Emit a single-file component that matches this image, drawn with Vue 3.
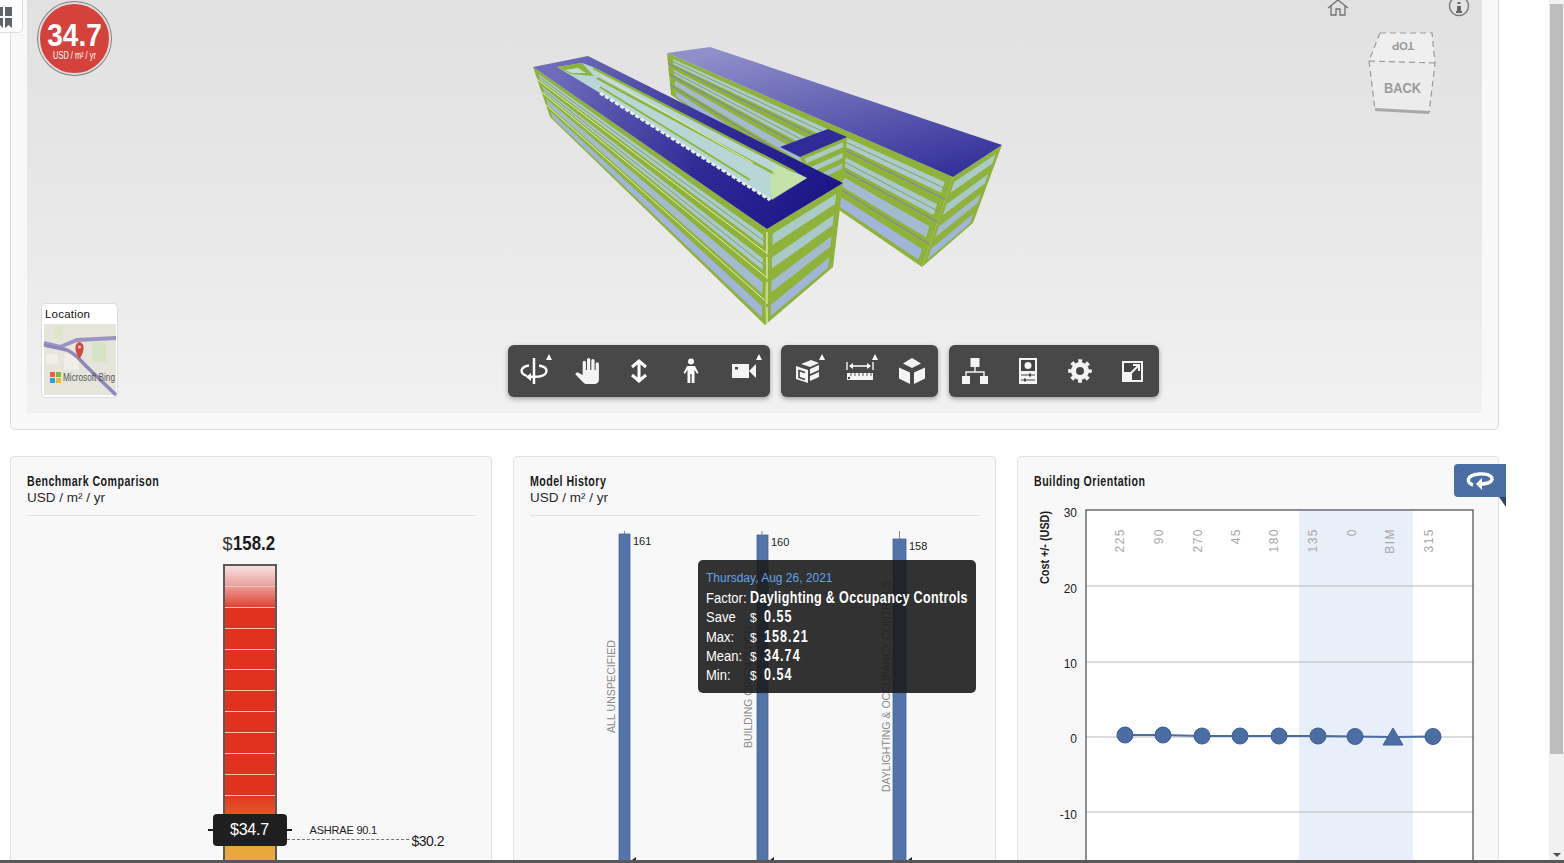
<script setup>
// Interpolate a point inside a four-cornered face
const mix = (a, b, t) => [a[0] + (b[0] - a[0]) * t, a[1] + (b[1] - a[1]) * t]
const at = (f, u, v) => mix(mix(f[0], f[1], u), mix(f[3], f[2], u), v)
const pts = (list) => list.map((p) => p[0].toFixed(1) + ',' + p[1].toFixed(1)).join(' ')

const glass = ['#abcbc8', '#a9c8ca', '#a3bacf', '#a1b4da']

// Window bands of one building face, one per floor
function bands(face, inset) {
  return glass.map((fill, i) => ({
    fill,
    points: pts([
      at(face, inset, (i + 0.34) / 4),
      at(face, 1 - inset, (i + 0.34) / 4),
      at(face, 1 - inset, (i + 0.82) / 4),
      at(face, inset, (i + 0.82) / 4),
    ]),
  }))
}

// Thin slab lines between floors, plus a frame line through the upper windows
function slabs(face, color) {
  const rows = [
    { v: 0.25, color }, { v: 0.5, color }, { v: 0.75, color },
    { v: 0.145, color: '#8a9c6c' }, { v: 0.395, color: '#8a9c6c' },
  ]
  return rows.map((r) => {
    const a = at(face, 0, r.v)
    const b = at(face, 1, r.v)
    return { x1: a[0], y1: a[1], x2: b[0], y2: b[1], color: r.color }
  })
}

const backSide = [[667, 53], [953, 177], [922, 267], [671, 95]]
const backEnd = [[953, 177], [1002, 145], [973, 223], [922, 267]]
const frontSide = [[533, 67], [767, 229], [765, 325], [550, 117]]
const frontEnd = [[767, 229], [843, 183], [833, 267], [765, 325]]
const linkSide = [[800, 157], [847, 137], [844, 180], [815, 195]]

const faces = [
  { id: 'backSide', outline: pts(backSide), windows: bands(backSide, 0.02), lines: slabs(backSide, '#7f78c4') },
  { id: 'backEnd', outline: pts(backEnd), windows: bands(backEnd, 0.08), lines: [] },
  { id: 'linkSide', outline: pts(linkSide), windows: bands(linkSide, 0.08).slice(0, 3), lines: [] },
  { id: 'frontSide', outline: pts(frontSide), windows: bands(frontSide, 0.015), lines: slabs(frontSide, '#e6f0a8') },
  { id: 'frontEnd', outline: pts(frontEnd), windows: bands(frontEnd, 0.08), lines: [] },
]

const segments = [
  'fade1', 'fade2', 'red', 'red', 'red', 'red', 'red', 'red', 'red', 'red', 'red',
]

const bars = [
  { x: 619, w: 11, top: 534, value: 161, label: 'ALL UNSPECIFIED', labelX: 615, labelY: 733, length: 93, stem: 624.5 },
  { x: 757, w: 11, top: 535, value: 160, label: 'BUILDING ORIENTATION', labelX: 752, labelY: 748, length: 122, stem: 762 },
  { x: 893, w: 13, top: 539, value: 158, label: 'DAYLIGHTING & OCCUPANCY CONTROLS', labelX: 890, labelY: 792, length: 211, stem: 899.5 },
]

const tooltipRows = [
  { name: 'Save', value: '0.55' },
  { name: 'Max:', value: '158.21' },
  { name: 'Mean:', value: '34.74' },
  { name: 'Min:', value: '0.54' },
]

const yTicks = [
  { label: '30', y: 510, labelY: 517 },
  { label: '20', y: 586, labelY: 593 },
  { label: '10', y: 662, labelY: 668 },
  { label: '0', y: 737, labelY: 743 },
  { label: '-10', y: 812, labelY: 819 },
]

const orientations = [
  { label: '225', x: 1125, labelX: 1120, y: 735 },
  { label: '90', x: 1163, labelX: 1159, y: 735 },
  { label: '270', x: 1202, labelX: 1198, y: 736 },
  { label: '45', x: 1240, labelX: 1236, y: 736 },
  { label: '180', x: 1279, labelX: 1274, y: 736 },
  { label: '135', x: 1318, labelX: 1313, y: 736 },
  { label: '0', x: 1355, labelX: 1352, y: 736.5 },
  { label: 'BIM', x: 1393, labelX: 1390, y: 737, bim: true },
  { label: '315', x: 1433, labelX: 1429, y: 736.5 },
]
const orientationLine = orientations.map((o) => o.x + ',' + o.y).join(' ')
</script>

<template>
  <div class="page">
    <div class="tab">
      <svg width="16" height="21" viewBox="0 0 16 21">
        <path fill="#5f6468" d="M0 0h6v9H0zM8 0h7v9H8zM0 11h6v10l-3-3-3 3zM8 11h7v10l-3.500-3L8 21z" />
      </svg>
    </div>

    <main class="main">
      <section class="viewer-panel">
        <div class="viewer">
          <div class="score">
            <b>34.7</b>
            <span>USD / m² / yr</span>
          </div>

          <svg class="building" width="520" height="300" viewBox="500 30 520 300">
            <defs>
              <linearGradient id="roofBack" x1="0.2" y1="0" x2="0.85" y2="1">
                <stop offset="0" stop-color="#8f8fca" />
                <stop offset="1" stop-color="#32309a" />
              </linearGradient>
              <linearGradient id="roofFront" gradientUnits="userSpaceOnUse" x1="560" y1="60" x2="810" y2="220">
                <stop offset="0" stop-color="#6f6dbb" />
                <stop offset="0.6" stop-color="#2e2a96" />
                <stop offset="1" stop-color="#1c1688" />
              </linearGradient>
            </defs>

            <g v-for="face in faces" :key="face.id">
              <polygon :points="face.outline" fill="#8fb33a" />
              <polygon v-for="(w, i) in face.windows" :key="i" :points="w.points" :fill="w.fill" />
              <line
                v-for="(l, i) in face.lines"
                :key="'l' + i"
                :x1="l.x1" :y1="l.y1" :x2="l.x2" :y2="l.y2"
                :stroke="l.color"
                stroke-width="1"
              />
            </g>
            <path d="M767 232V325" stroke="#e8f0b0" stroke-width="1.200" stroke-dasharray="22 3" />

            <polygon points="667,53 710,47 1002,145 953,177" fill="url(#roofBack)" />
            <polygon points="780,147 828,129 847,137 800,157" fill="#2f2b98" />

            <!-- front wing roof with its courtyard -->
            <polygon points="533,67 588,56 843,183 767,229" fill="url(#roofFront)" />
            <polygon points="557,67 582,63 593,67 807,178 770,200 600,93" fill="#b9d6d6" />
            <polygon points="557,67 582,63 594,76 571,74" fill="#8fb33a" />
            <polygon points="565,70 578,68 586,73 572,73" fill="#c2dedc" />
            <path d="M593 68 L795 172" stroke="#8fb33a" stroke-width="2.500" fill="none" />
            <path d="M597 78 L775 174" stroke="#8fb33a" stroke-width="2.500" fill="none" />
            <path d="M600 75 L753 163" stroke="#e6f0a8" stroke-width="1" fill="none" />
            <path d="M600 87 L750 180" stroke="#8fb33a" stroke-width="2" fill="none" />
            <path d="M600 93 L770 200" stroke="#e4f0f2" stroke-width="3" stroke-dasharray="4 2" fill="none" />
            <polygon points="775,165 807,178 772,200 770,180" fill="#c9e59a" opacity="0.75" />
          </svg>

          <button class="home" type="button" aria-label="Home">
            <svg width="22" height="16" viewBox="0 0 22 16">
              <path d="M1 8 L11 0 L21 8 M4 6 V15 H9 V9 H13 V15 H18 V6" fill="none" stroke="#707070" stroke-width="1.300" />
            </svg>
          </button>
          <div class="info">
            <svg width="22" height="17" viewBox="0 0 22 17">
              <circle cx="11" cy="6" r="9.500" fill="#e4e4e4" stroke="#7c7c7c" stroke-width="1.500" />
              <rect x="9.500" y="2" width="3" height="2" fill="#666" />
              <path d="M9 6h4v5h1v2H8v-2h1z" fill="#666" />
            </svg>
          </div>

          <svg class="cube" width="80" height="95" viewBox="1360 25 80 95">
            <polygon points="1380,33 1432,33 1435,63 1369,61" fill="#efefef" />
            <polygon points="1369,61 1435,63 1429,113 1375,110" fill="#ececec" />
            <polygon points="1375,108 1429,111 1429,114 1375,111" fill="#a8a8a8" />
            <path d="M1380 33 H1432 L1435 63 L1429 113 M1380 33 L1369 61 L1375 110 M1369 61 L1435 63" fill="none" stroke="#9b9b9b" stroke-width="1.200" stroke-dasharray="6 4" />
            <text class="cube-top" transform="rotate(180 1403 46)" x="1403" y="50" text-anchor="middle">TOP</text>
            <text class="cube-back" x="1384" y="93" textLength="37" lengthAdjust="spacingAndGlyphs">BACK</text>
          </svg>

          <div class="location">
            <div class="location-title">Location</div>
            <svg class="map" width="72" height="71" viewBox="0 0 72 71">
              <rect width="72" height="71" fill="#e6e5dc" />
              <rect x="48" y="18" width="14" height="20" fill="#d6e3c4" />
              <rect x="10" y="2" width="9" height="13" fill="#dde6c8" />
              <path d="M20 30h14v16H20zM2 30h12v10H2z" fill="#efeee8" />
              <path d="M0 19L16 23L33 16L72 14" fill="none" stroke="#9d93c4" stroke-width="4" />
              <path d="M0 21L23 26C32 30 38 38 43 43L72 71" fill="none" stroke="#8f86ba" stroke-width="3.500" />
              <path d="M35.500 35C30 27 30 19 35.500 18C41 19 41 27 35.500 35Z" fill="#cf4a43" />
              <circle cx="35.500" cy="23" r="1.500" fill="#f3d0cc" />
              <rect x="6" y="48" width="5" height="5" fill="#e8603c" />
              <rect x="12" y="48" width="5" height="5" fill="#7fb93c" />
              <rect x="6" y="54" width="5" height="5" fill="#2f9fe0" />
              <rect x="12" y="54" width="5" height="5" fill="#f2b92c" />
              <text class="map-brand" x="19" y="57" textLength="52" lengthAdjust="spacingAndGlyphs">Microsoft Bing</text>
            </svg>
          </div>

          <div class="toolbar">
            <div class="tool-group">
              <button class="tool has-menu" type="button">
                <svg width="32" height="32" viewBox="0 0 32 32">
                  <path d="M16 3V29" stroke="#fff" stroke-width="2.500" />
                  <path d="M9 21C1 18 2 12 11 10.500M21 10.500C31 12 31 20 21 21.500L11 22" fill="none" stroke="#fff" stroke-width="2.400" />
                  <path d="M13 18L8 22L13 26Z" fill="#fff" />
                </svg>
              </button>
              <button class="tool" type="button">
                <svg width="26" height="26" viewBox="0 0 24 24">
                  <path fill="#f4f4f4" d="M23 5.500V20c0 2.200-1.800 4-4 4h-7.300c-1.080 0-2.100-.43-2.850-1.190L1 14.830s1.260-1.230 1.300-1.250c.22-.19.49-.29.79-.29.22 0 .42.06.6.16.04.01 4.310 2.460 4.310 2.460V4c0-.83.67-1.500 1.500-1.500S11 3.170 11 4v7h1V1.500c0-.83.67-1.500 1.500-1.500S15 .67 15 1.500V11h1V2.500c0-.83.67-1.500 1.500-1.500s1.500.67 1.500 1.500V11h1V5.500c0-.83.67-1.500 1.500-1.500s1.500.67 1.500 1.500z" />
                </svg>
              </button>
              <button class="tool" type="button">
                <svg width="32" height="32" viewBox="0 0 32 32">
                  <path d="M16 8V24M9 12L16 6L23 12M9 20L16 26L23 20" fill="none" stroke="#fff" stroke-width="3" />
                </svg>
              </button>
              <button class="tool" type="button">
                <svg width="32" height="32" viewBox="0 0 32 32">
                  <circle cx="16" cy="6.500" r="3" fill="#fff" />
                  <path fill="#fff" d="M12 11h8l3.500 7-1.500.8-2.500-4V28h-2.800v-9h-1.400v9h-2.800V14.800l-2.500 4L8.500 18z" />
                </svg>
              </button>
              <button class="tool has-menu" type="button">
                <svg width="32" height="32" viewBox="0 0 32 32">
                  <rect x="4" y="9" width="17" height="14" fill="#f4f4f4" />
                  <rect x="7" y="12" width="3" height="2.500" fill="#444" />
                  <path d="M21 16L28 9V23Z" fill="#f4f4f4" />
                </svg>
              </button>
            </div>

            <div class="tool-group">
              <button class="tool has-menu" type="button">
                <svg width="32" height="32" viewBox="0 0 32 32">
                  <path fill="#f4f4f4" d="M5 11L17 15V28L5 24Z" />
                  <path d="M14 17.500L8 15.500V22.500L14 24.500" fill="none" stroke="#444" stroke-width="1.600" />
                  <path fill="#f4f4f4" d="M10 9L20 5L28 8L19 12ZM19 14L28 10V15L19 19ZM19 21L28 17V22L19 26Z" />
                </svg>
              </button>
              <button class="tool has-menu" type="button">
                <svg width="32" height="32" viewBox="0 0 32 32">
                  <path d="M3 7V15M29 7V15M6 11H26" stroke="#fff" stroke-width="1.300" fill="none" />
                  <path d="M9 8L5 11L9 14ZM23 8L27 11L23 14Z" fill="#fff" />
                  <rect x="3" y="18" width="26" height="7" fill="#f4f4f4" />
                  <path d="M7 18V21M11 18V21M15 18V21M19 18V21M23 18V21M27 18V21" stroke="#555" stroke-width="1" />
                  <rect x="4" y="22" width="2" height="2" fill="#444" />
                </svg>
              </button>
              <button class="tool" type="button">
                <svg width="32" height="32" viewBox="0 0 32 32">
                  <path fill="#f4f4f4" d="M16 3L25 8.500L16 13L7 8.500ZM3 12.500L14 17.500V29L3 23.500ZM29 12.500L18 17.500V29L29 23.500Z" />
                </svg>
              </button>
            </div>

            <div class="tool-group">
              <button class="tool" type="button">
                <svg width="32" height="32" viewBox="0 0 32 32">
                  <rect x="11.500" y="3" width="9" height="9" fill="#f4f4f4" />
                  <path d="M16 12V17M7 21V17H25V21" fill="none" stroke="#f4f4f4" stroke-width="1.400" />
                  <rect x="3" y="21" width="8" height="8" fill="#f4f4f4" />
                  <rect x="21" y="21" width="8" height="8" fill="#f4f4f4" />
                </svg>
              </button>
              <button class="tool" type="button">
                <svg width="32" height="32" viewBox="0 0 32 32">
                  <rect x="7" y="3" width="18" height="26" fill="#f4f4f4" />
                  <rect x="9" y="5" width="14" height="11" fill="#444" />
                  <circle cx="16" cy="10.500" r="3.500" fill="#f4f4f4" />
                  <path d="M9 20H23M9 25H23" stroke="#444" stroke-width="1.200" />
                  <rect x="17" y="18.500" width="2" height="3" fill="#444" />
                  <rect x="12" y="23.500" width="2" height="3" fill="#444" />
                </svg>
              </button>
              <button class="tool" type="button">
                <svg width="32" height="32" viewBox="0 0 32 32">
                  <circle cx="16" cy="16" r="6.500" fill="none" stroke="#f4f4f4" stroke-width="5" />
                  <circle cx="16" cy="16" r="10" fill="none" stroke="#f4f4f4" stroke-width="3.600" stroke-dasharray="3.850 4" stroke-dashoffset="2" />
                </svg>
              </button>
              <button class="tool" type="button">
                <svg width="32" height="32" viewBox="0 0 32 32">
                  <rect x="6" y="6" width="21" height="21" fill="#f4f4f4" />
                  <rect x="8" y="8" width="17" height="17" fill="#444" />
                  <rect x="8" y="17" width="8" height="8" fill="#f4f4f4" />
                  <path d="M15 18L23 10M17 10H23V16" fill="none" stroke="#f4f4f4" stroke-width="2" />
                </svg>
              </button>
            </div>
          </div>
        </div>
      </section>

      <div class="cards">
        <section class="card">
          <header class="card-head ruled">
            <h3>Benchmark Comparison</h3>
            <p>USD / m² / yr</p>
          </header>
          <div class="benchmark">
            <div class="peak"><span>$</span><b>158.2</b></div>
            <div class="tube">
              <div v-for="(s, i) in segments" :key="i" class="segment" :class="s"></div>
              <div class="segment blend"></div>
              <div class="segment orange"></div>
              <div class="marker"><i></i><span>$34.7</span></div>
              <div class="ashrae">
                <span class="ashrae-name">ASHRAE 90.1</span>
                <span class="ashrae-line"></span>
                <span class="ashrae-value">$30.2</span>
              </div>
            </div>
          </div>
        </section>

        <section class="card">
          <header class="card-head ruled">
            <h3>Model History</h3>
            <p>USD / m² / yr</p>
          </header>
          <div class="history">
            <svg width="449" height="360" viewBox="530 516 449 360">
              <g v-for="b in bars" :key="b.value">
                <line :x1="b.stem" :x2="b.stem" y1="531" :y2="b.top" stroke="#8a8a8a" />
                <rect :x="b.x" :y="b.top" :width="b.w" height="340" fill="#5274a8" stroke="#46659a" stroke-width="0.800" />
                <text class="bar-value" :x="b.x + b.w + 3" :y="b.top + 11">{{ b.value }}</text>
                <text
                  class="bar-label"
                  :transform="`rotate(-90 ${b.labelX} ${b.labelY})`"
                  :x="b.labelX"
                  :y="b.labelY"
                  :textLength="b.length"
                  lengthAdjust="spacingAndGlyphs"
                >{{ b.label }}</text>
                <path :d="`M${b.x + b.w + 2} 860 l4 -3 v3z`" fill="#222" />
              </g>
            </svg>
            <div class="tooltip">
              <div class="tip-date">Thursday, Aug 26, 2021</div>
              <div class="tip-row">
                <span class="tip-name">Factor:</span>
                <b class="tip-value wide">Daylighting &amp; Occupancy Controls</b>
              </div>
              <div v-for="r in tooltipRows" :key="r.name" class="tip-row">
                <span class="tip-name">{{ r.name }}</span>
                <span class="tip-cur">$</span>
                <b class="tip-value">{{ r.value }}</b>
              </div>
            </div>
          </div>
        </section>

        <section class="card">
          <header class="card-head">
            <h3>Building Orientation</h3>
          </header>
          <div class="orientation">
            <svg width="449" height="370" viewBox="1034 500 449 370">
              <text class="axis-title" transform="rotate(-90 1049 584)" x="1049" y="584" textLength="73" lengthAdjust="spacingAndGlyphs">Cost +/- (USD)</text>
              <rect x="1086" y="510" width="387" height="360" fill="#fff" />
              <rect x="1299" y="510" width="114" height="360" fill="#e9eff8" />
              <g v-for="t in yTicks" :key="t.label">
                <line v-if="t.y > 510" x1="1086" x2="1473" :y1="t.y" :y2="t.y" stroke="#b5b9bf" stroke-width="1" />
                <text class="y-label" x="1077" :y="t.labelY" text-anchor="end">{{ t.label }}</text>
              </g>
              <rect x="1086" y="510" width="387" height="360" fill="none" stroke="#4a4a4a" stroke-width="1.200" />
              <polyline :points="orientationLine" fill="none" stroke="#4a6da3" stroke-width="1.800" />
              <g v-for="o in orientations" :key="o.label">
                <text class="o-label" :transform="`rotate(-90 ${o.labelX + 4} 528)`" :x="o.labelX + 4" y="528" text-anchor="end">{{ o.label }}</text>
                <polygon v-if="o.bim" :points="`${o.x},${o.y - 9} ${o.x + 10},${o.y + 8} ${o.x - 10},${o.y + 8}`" fill="#4a6da3" stroke="#3f5f92" />
                <circle v-else :cx="o.x" :cy="o.y" r="8" fill="#4a6da3" stroke="#3f5f92" />
              </g>
            </svg>
          </div>
          <button class="ribbon" type="button" aria-label="Rotate">
            <svg width="32" height="22" viewBox="0 0 32 22">
              <path d="M9 15C2 13 2 5 15 4C27 3 31 9 26 12C23 14 19 14 15 14" fill="none" stroke="#fff" stroke-width="3.400" />
              <path d="M18 8L12 14L18 20Z" fill="#fff" />
            </svg>
          </button>
        </section>
      </div>
    </main>

    <div class="scrollbar">
      <div class="thumb"></div>
      <div class="arrow"></div>
    </div>
    <div class="bottom-edge"></div>
  </div>
</template>

<style>
html, body {
  margin: 0;
  background: #fff;
  overflow: hidden;
}
</style>

<style scoped>
.page {
  position: relative;
  height: 863px;
  overflow: hidden;
  background: #fff;
  font-family: "Liberation Sans", Arial, sans-serif;
  color: #222;
}
.main {
  width: 1489px;
  margin-left: 10px;
}
button {
  border: 0;
  padding: 0;
  background: none;
}

/* left edge tab */
.tab {
  position: absolute;
  left: -4px;
  top: -2px;
  width: 27px;
  height: 35px;
  background: #fff;
  border: 1px solid #ddd;
  border-radius: 0 0 5px 0;
  box-sizing: border-box;
  padding-top: 8px;
  z-index: 2;
}
.tab svg {
  display: block;
}

/* 3D viewer */
.viewer-panel {
  height: 430px;
  box-sizing: border-box;
  padding: 0 16px 16px;
  background: #f8f8f8;
  border: 1px solid #dcdcdc;
  border-top: 0;
  border-radius: 0 0 5px 5px;
}
.viewer {
  position: relative;
  height: 413px;
  background: linear-gradient(#e1e1e1, #e6e6e6 40%, #f1f1f1);
}
.score {
  position: absolute;
  left: 11px;
  top: 2px;
  width: 73px;
  height: 73px;
  box-sizing: border-box;
  border-radius: 50%;
  background: #d5423c;
  border: 2px solid #dedede;
  box-shadow: 0 0 0 1px #7d7d7d;
  color: #fff;
  text-align: center;
  white-space: nowrap;
}
.score b {
  display: block;
  font-size: 31px;
  line-height: 32px;
  margin-top: 16px;
  transform: scaleX(0.9);
}
.score span {
  display: block;
  font-size: 10px;
  line-height: 10px;
  margin-top: -1px;
  transform: scaleX(0.74);
}
.building {
  position: absolute;
  left: 473px;
  top: 30px;
}
.home {
  position: absolute;
  left: 1300px;
  top: 0;
  line-height: 0;
}
.info {
  position: absolute;
  left: 1421px;
  top: 0;
  line-height: 0;
}
.cube {
  position: absolute;
  left: 1333px;
  top: 25px;
}
.cube-top {
  font: bold 11px "Liberation Sans", sans-serif;
  fill: #999;
}
.cube-back {
  font: bold 14px "Liberation Sans", sans-serif;
  fill: #9a9a9a;
}
.location {
  position: absolute;
  left: 14px;
  top: 303px;
  width: 77px;
  height: 95px;
  box-sizing: border-box;
  padding: 3px 2px 2px;
  background: #fff;
  border: 1px solid #ddd;
  border-radius: 5px;
}
.location-title {
  height: 17px;
  padding: 0 1px;
  font-size: 11.500px;
  line-height: 15px;
  color: #111;
  letter-spacing: 0.2px;
}
.map {
  display: block;
  overflow: visible;
}
.map-brand {
  font: 10.500px "Liberation Sans", sans-serif;
  fill: #555;
}
.toolbar {
  position: absolute;
  left: 481px;
  top: 345px;
  display: flex;
  gap: 11px;
}
.tool-group {
  display: flex;
  height: 52px;
  background: #484848;
  border-radius: 6px;
  box-shadow: 0 2px 5px rgba(0, 0, 0, 0.35);
}
.tool {
  position: relative;
  width: 52.400px;
  display: flex;
  align-items: center;
  justify-content: center;
}
.tool.has-menu::after {
  content: "";
  position: absolute;
  right: 8px;
  top: 9px;
  border-left: 3.500px solid transparent;
  border-right: 3.500px solid transparent;
  border-bottom: 6px solid #fff;
}

/* lower cards */
.cards {
  display: grid;
  grid-template-columns: 482px 483px 482px;
  gap: 21px;
  margin-top: 26px;
}
.card {
  position: relative;
  height: 480px;
  box-sizing: border-box;
  padding: 16px;
  background: #f8f8f9;
  border: 1px solid #e2e2e2;
  border-radius: 4px;
}
.card-head h3 {
  margin: 0;
  font-size: 14px;
  font-weight: bold;
  line-height: 16px;
  letter-spacing: 0.6px;
  color: #1c1c1c;
  white-space: nowrap;
  transform: scaleX(0.76);
  transform-origin: left;
}
.card-head p {
  margin: 1px 0 0;
  font-size: 13.500px;
  line-height: 15px;
  color: #2a2a2a;
}
.card-head.ruled {
  padding-bottom: 10px;
  border-bottom: 1px solid #e0e0e0;
}

/* benchmark */
.benchmark {
  display: flex;
  flex-direction: column;
  align-items: center;
  padding-right: 3px;
}
.peak {
  width: 54px;
  height: 48px;
  box-sizing: border-box;
  padding-top: 15px;
  font-size: 18px;
  line-height: 23px;
  color: #333;
  white-space: nowrap;
}
.peak b {
  display: inline-block;
  font-size: 21px;
  line-height: 23px;
  color: #1c1c1c;
  transform: scaleX(0.8);
  transform-origin: left;
}
.tube {
  position: relative;
  width: 54px;
  box-sizing: border-box;
  border: 2px solid #5a5a5a;
  border-bottom: 0;
  background: #fff;
}
.segment {
  height: 20.900px;
  box-sizing: border-box;
  border-bottom: 1.500px solid #f2c3b6;
}
.segment.fade1 {
  background: linear-gradient(#f8e0df, #e8a09b);
}
.segment.fade2 {
  background: linear-gradient(#ed9b93, #dd4232);
}
.segment.red {
  background: #e0321f;
}
.segment.blend {
  background: linear-gradient(#e0381f, #e0602a);
  border: 0;
}
.segment.orange {
  height: 60px;
  border: 0;
  background: #e8a83c;
}
.marker {
  position: absolute;
  left: -12px;
  top: 248px;
  width: 74px;
  height: 32px;
  border-radius: 4px;
  background: #1f1f1f;
  color: #fff;
  font-size: 16px;
  line-height: 32px;
  text-align: center;
}
.marker i {
  position: absolute;
  left: -5px;
  right: -5px;
  top: 15px;
  height: 2px;
  background: #1f1f1f;
}
.marker span {
  position: relative;
  letter-spacing: -0.2px;
}
.ashrae {
  position: absolute;
  left: 62px;
  top: 258px;
  width: 160px;
  height: 24px;
}
.ashrae-name {
  position: absolute;
  left: 23px;
  top: 0;
  font-size: 11px;
  line-height: 13px;
  letter-spacing: -0.2px;
}
.ashrae-line {
  position: absolute;
  left: 0;
  top: 15px;
  width: 122px;
  border-top: 1px dashed #777;
}
.ashrae-value {
  position: absolute;
  left: 125px;
  top: 9px;
  font-size: 14px;
  line-height: 16px;
  letter-spacing: -0.5px;
}

/* model history */
.history {
  position: relative;
}
.history svg,
.orientation svg {
  display: block;
  overflow: visible;
}
.bar-value {
  font: 11px "Liberation Sans", sans-serif;
  fill: #222;
}
.bar-label {
  font: 11.500px "Liberation Sans", sans-serif;
  fill: #8a8a8a;
}
.tooltip {
  position: absolute;
  left: 168px;
  top: 44px;
  width: 278px;
  height: 133px;
  box-sizing: border-box;
  padding: 11px 8px 0;
  background: rgba(28, 28, 28, 0.9);
  border-radius: 5px;
  color: #fff;
  white-space: nowrap;
}
.tip-date {
  font-size: 12px;
  line-height: 15px;
  color: #63a3e8;
  margin-bottom: 2px;
}
.tip-row {
  display: flex;
  align-items: baseline;
  height: 19.300px;
  font-size: 15.500px;
  line-height: 19px;
}
.tip-name {
  width: 44px;
  flex: none;
  transform: scaleX(0.84);
  transform-origin: left;
}
.tip-cur {
  width: 14px;
  flex: none;
  font-size: 12px;
}
.tip-value {
  flex: none;
  font-size: 16.500px;
  letter-spacing: 1.400px;
  transform: scaleX(0.76);
  transform-origin: left;
}
.tip-value.wide {
  letter-spacing: 0.450px;
}

/* building orientation */
.orientation {
  margin-top: 11px;
}
.axis-title {
  font: bold 13px "Liberation Sans", sans-serif;
  fill: #1c1c1c;
}
.y-label {
  font: 12px "Liberation Sans", sans-serif;
  fill: #222;
}
.o-label {
  font: 12px "Liberation Sans", sans-serif;
  fill: #a8a8a8;
  letter-spacing: 1.500px;
}
.ribbon {
  position: absolute;
  left: 436px;
  top: 7px;
  width: 52px;
  height: 33px;
  display: flex;
  align-items: center;
  justify-content: center;
  background: #4a6da3;
  border-radius: 4px 0 0 4px;
}
.ribbon::after {
  content: "";
  position: absolute;
  right: 0;
  top: 33px;
  border-top: 10px solid #2f4668;
  border-left: 7px solid transparent;
}

/* page scrollbar and bottom edge */
.scrollbar {
  position: absolute;
  right: 0;
  top: 0;
  bottom: 0;
  width: 15px;
  background: #f1f1f1;
}
.thumb {
  width: 13px;
  height: 750px;
  margin: 4px 1px 0;
  background: #bdbdbd;
}
.arrow {
  position: absolute;
  left: 4px;
  bottom: 6px;
  border-left: 4px solid transparent;
  border-right: 4px solid transparent;
  border-top: 4px solid #505050;
}
.bottom-edge {
  position: absolute;
  left: 0;
  right: 0;
  bottom: 0;
  height: 3px;
  background: #58585a;
}
</style>
